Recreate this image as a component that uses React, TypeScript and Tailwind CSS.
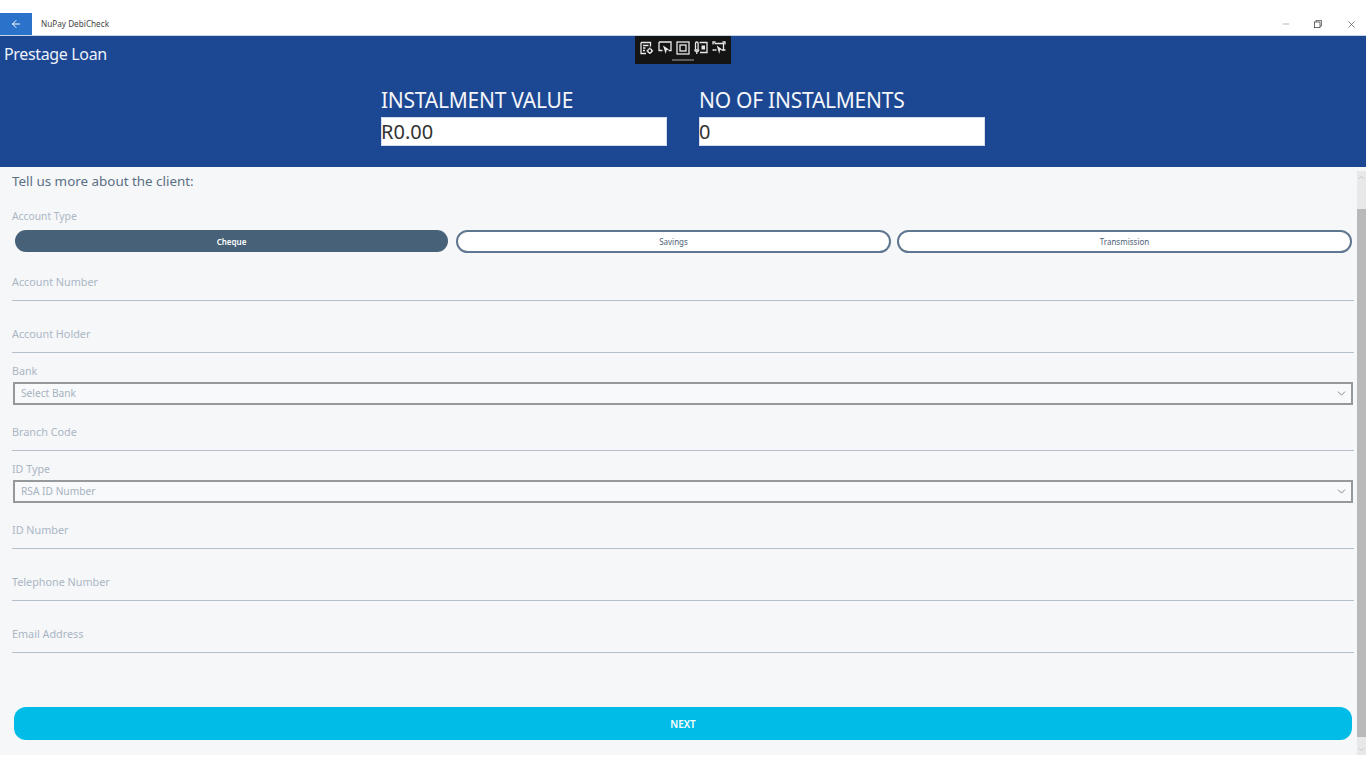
import React from 'react';
import { ArrowLeft, ChevronDown, ChevronUp, Minus, X } from 'lucide-react';

const font = { fontFamily: '"Noto Sans", "Open Sans", sans-serif' };

const UnderlineField: React.FC<{ label: string; className?: string }> = ({ label, className }) => (
  <div className={`h-[52px] flex flex-col justify-end ${className || ''}`}>
    <div className="h-[18px] mb-[9px] flex items-center text-[10.8px] leading-none text-[#aab6c4]">{label}</div>
    <div className="h-px bg-[#b4bfcb]" />
  </div>
);

const SelectField: React.FC<{ label: string; value: string }> = ({ label, value }) => (
  <div>
    <div className="h-[16px] mt-[10px] mb-[3px] flex items-center text-[10.7px] leading-none text-[#aab6c4]">{label}</div>
    <div className="h-[23px] mx-px border-2 border-[#96999c] bg-[#f8f9fb] pl-[6px] pr-[3px] flex items-center justify-between text-[10.2px] leading-none text-[#a6b2c0]">
      <span className="-mt-px">{value}</span>
      <ChevronDown className="w-[13px] h-[13px] text-[#66717d]" strokeWidth={1.5} />
    </div>
  </div>
);

const Amount: React.FC<{ label: string; value: string }> = ({ label, value }) => (
  <div className="w-[286px]">
    <div className="h-[30px] flex items-center text-[21px] leading-none text-[#f4f6fa] tracking-[-0.25px]">{label}</div>
    <div className="h-[29px] mt-[2px] bg-white border border-[#d5dcec] flex items-center text-[20px] leading-none text-[#333]">
      <span className="-ml-px mt-[1px]">{value}</span>
    </div>
  </div>
);

// toolbar drawings, roughly what the game bar shows
const ToolIcon: React.FC<{ children: React.ReactNode }> = ({ children }) => (
  <svg viewBox="0 0 14 14" className="w-[14px] h-[14px]" fill="none" stroke="#e8e8e8" strokeWidth="1.3">
    {children}
  </svg>
);

const FloatingToolbar = () => (
  <div className="absolute left-[635px] top-[36px] w-[96px] h-[28px] bg-[#141414] flex flex-col items-center">
    <div className="flex gap-[4px] mt-[5px] h-[14px]">
      <ToolIcon>
        <path d="M1 1.5h9.5v4M1 1.5v11h5M3 4.5h5.5M3 7h2.5M3 9.5h2" />
        <circle cx="9.8" cy="9.8" r="2" />
        <path d="M9.8 6.5v1.2M9.8 11.9v1.2M6.5 9.8h1.2M11.9 9.8h1.2" />
      </ToolIcon>
      <ToolIcon>
        <path d="M1 1h12v8.5h-2.5M4.5 9.5H1v-8.5" />
        <path d="M5 4.5l6 4-2.4.7-.9 3.8z" fill="#e8e8e8" stroke="none" />
      </ToolIcon>
      <ToolIcon>
        <rect x="1" y="1" width="12" height="12" />
        <rect x="4" y="4" width="6" height="6" />
      </ToolIcon>
      <ToolIcon>
        <path d="M5.5 1.5H13v10H6" />
        <rect x="1.5" y="1" width="2.6" height="8" rx="1.3" />
        <path d="M.8 8.5a2 2 0 0 0 4 0M2.8 10.5V13" />
        <rect x="7.5" y="4.5" width="3.5" height="4" fill="#e8e8e8" stroke="none" />
      </ToolIcon>
      <ToolIcon>
        <path d="M2.5 2.5h9v6.5H9.5M4.5 9h-2z" />
        <path d="M.5 1h3M1 .5v3M10.5 1h3M13 .5v3M.5 9h2M11.5 9h2" />
        <path d="M4.8 4.5l5.5 4-2.3.6-.8 3.9z" fill="#e8e8e8" stroke="none" />
      </ToolIcon>
    </div>
    <div className="w-[22px] h-[2px] mt-[4px] bg-[#5b5b5b]" />
  </div>
);

export default function App() {
  return (
    <div className="relative w-[1366px] h-[768px] overflow-hidden bg-white flex flex-col" style={font}>
      <div className="h-[13px] bg-white" />

      {/* title bar */}
      <div className="h-[23px] flex items-center bg-white border-b border-[#c9d4e8]">
        <div className="w-[32px] h-[22px] bg-[#2b72cb] flex items-center justify-center">
          <ArrowLeft className="w-[12px] h-[12px] text-white" strokeWidth={2} />
        </div>
        <span className="ml-[9px] mt-px text-[8.2px] leading-none text-[#444]">NuPay DebiCheck</span>
        <div className="ml-auto flex items-center text-[#555]">
          <Minus className="w-[10px] h-[10px] mr-[23px]" strokeWidth={1} />
          <svg viewBox="0 0 10 10" className="w-[8px] h-[8px] mr-[24px]" fill="none" stroke="#444" strokeWidth="1">
            <rect x="0.5" y="2.5" width="7" height="7" />
            <path d="M2.5 2.5v-2h7v7h-2" />
          </svg>
          <X className="w-[11px] h-[11px] mr-[9px]" strokeWidth={1.5} />
        </div>
      </div>

      {/* blue header */}
      <div className="h-[131px] bg-[#1b4793] px-[4px]">
        <div className="h-[36px] flex items-center text-[16px] leading-none text-[#eef2f9] tracking-[-0.35px]">Prestage Loan</div>
        <div className="flex justify-center gap-[32px] mt-[13px]">
          <Amount label="INSTALMENT VALUE" value="R0.00" />
          <Amount label="NO OF INSTALMENTS" value="0" />
        </div>
      </div>

      {/* form area */}
      <div className="h-[588px] bg-[#f6f7f9] flex">
        <div className="flex-1 min-w-0 pl-[12px] pr-[3px]">
          <div className="h-[29px] flex items-center text-[13.4px] leading-none text-[#5b6f84]">Tell us more about the client:</div>
          <div className="h-[20px] mt-[10px] flex items-center text-[10.3px] leading-none text-[#aab6c4]">Account Type</div>
          <div className="flex h-[23px] mt-[4px] pl-[3px] pr-[2px]">
            <div className="w-[433px] h-[22px] rounded-full bg-[#476179] flex items-center justify-center pt-[2px] text-[8px] font-semibold leading-none text-white">Cheque</div>
            <div className="w-[435px] ml-[8px] rounded-full bg-white border-2 border-[#5f7690] flex items-center justify-center pt-px text-[8px] leading-none text-[#4d6278]">Savings</div>
            <div className="flex-1 ml-[6px] rounded-full bg-white border-2 border-[#5f7690] flex items-center justify-center pt-px text-[8px] leading-none text-[#4d6278]">Transmission</div>
          </div>
          <UnderlineField label="Account Number" className="-mt-[5px] !h-[53px]" />
          <UnderlineField label="Account Holder" />
          <SelectField label="Bank" value="Select Bank" />
          <UnderlineField label="Branch Code" className="!h-[46px]" />
          <SelectField label="ID Type" value="RSA ID Number" />
          <UnderlineField label="ID Number" className="!h-[46px]" />
          <UnderlineField label="Telephone Number" />
          <UnderlineField label="Email Address" />
          <div className="h-[33px] mt-[54px] ml-[2px] mr-[2px] rounded-[12px] bg-[#00bce6] flex items-center justify-center text-[10px] font-semibold leading-none text-white">NEXT</div>
        </div>

        {/* scrollbar */}
        <div className="w-[9px] mt-[4px] bg-[#e8e8e8] flex flex-col shrink-0">
          <div className="h-[38px] flex justify-center pt-[2px]">
            <ChevronUp className="w-[9px] h-[9px] text-[#a8a8a8]" strokeWidth={1.5} />
          </div>
          <div className="flex-1 bg-[#b9b9b9]" />
          <div className="h-[18px] flex justify-center items-end pb-[1px]">
            <ChevronDown className="w-[9px] h-[9px] text-[#a8a8a8]" strokeWidth={1.5} />
          </div>
        </div>
      </div>

      <div className="flex-1 bg-white" />
      <FloatingToolbar />
    </div>
  );
}
